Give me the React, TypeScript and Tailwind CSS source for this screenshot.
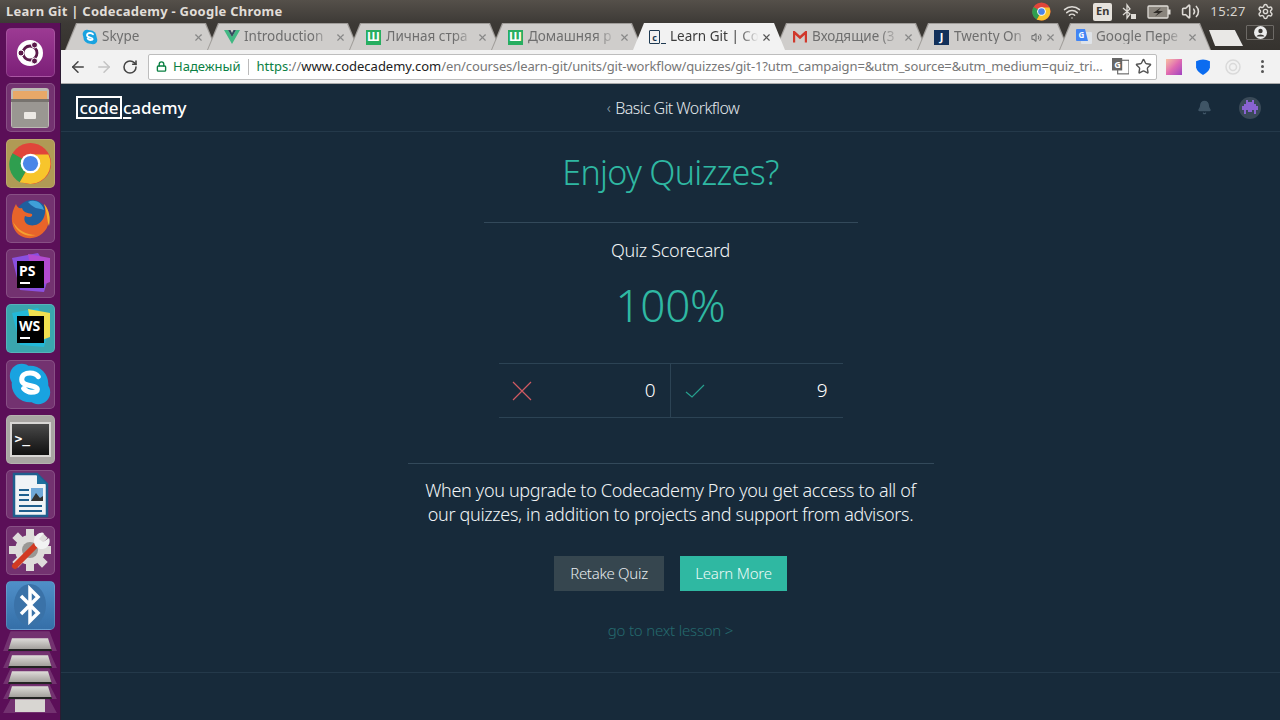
import { ArrowLeft, ArrowRight, Bell, Lock, RotateCw, Settings, Star, Volume2, Wifi, X } from "lucide-react";
import type { ReactNode } from "react";

const sans = "font-['Noto_Sans',sans-serif]";

function ChromeLogo({ size }: { size: number }) {
  return (
    <svg width={size} height={size} viewBox="0 0 48 48">
      <circle cx="24" cy="24" r="23" fill="#e0453a" />
      <path d="M24 24 L12 45 A23 23 0 0 1 4 12.500 Z" fill="#2f9e4f" />
      <path d="M24 14 L44 14 A23 23 0 0 1 24 47 L12 45 L24 24 Z" fill="#f7c52c" />
      <circle cx="24" cy="24" r="11" fill="#fff" />
      <circle cx="24" cy="24" r="8.500" fill="#4a86e8" />
    </svg>
  );
}

function SkypeLogo({ size }: { size: number }) {
  return (
    <svg width={size} height={size} viewBox="0 0 48 48">
      <circle cx="15" cy="15" r="13" fill="#19a3e0" />
      <circle cx="33" cy="33" r="13" fill="#19a3e0" />
      <circle cx="24" cy="24" r="20" fill="#19a3e0" />
      <path d="M33 16c-2-3-5-4-9-4-5 0-9 2-9 7 0 9 17 5 17 11 0 2-3 3-7 3-4 0-6-2-8-4" fill="none" stroke="#fff" strokeWidth="5.500" strokeLinecap="round" />
    </svg>
  );
}

function Tile({ children, className = "bg-white/15" }: { children?: ReactNode; className?: string }) {
  return (
    <div className={`w-[49px] h-[49px] rounded-[5px] flex items-center justify-center border border-white/15 overflow-hidden ${className}`}>
      {children}
    </div>
  );
}

function JetBrains({ label, colors }: { label: string; colors: string[] }) {
  return (
    <svg width="44" height="44" viewBox="0 0 44 44">
      <path d="M4 6 L30 1 L42 20 L36 40 L12 38 Z" fill={colors[0]} />
      <path d="M20 2 L42 6 L42 30 L26 36 Z" fill={colors[1]} />
      <rect x="9" y="9" width="27" height="27" fill="#000" />
      <text x="11" y="24" fontSize="14" fontWeight="700" fill="#fff" fontFamily="Noto Sans, sans-serif">{label}</text>
      <rect x="12" y="30" width="10" height="2" fill="#fff" />
    </svg>
  );
}

function Launcher() {
  return (
    <aside className="w-[61px] shrink-0 bg-[#5b0f58] border-r border-[#2c1c33] flex flex-col items-center pt-[5px] gap-[6.300px] overflow-hidden">
      <Tile className="bg-gradient-to-b from-[#9c3a93] to-[#7c1f78]">
        <svg width="30" height="30" viewBox="0 0 30 30">
          <circle cx="15" cy="15" r="13" fill="#fff" />
          <circle cx="15" cy="15" r="7" fill="none" stroke="#5b1a4a" strokeWidth="2.800" />
          <circle cx="6" cy="15" r="3" fill="#5b1a4a" stroke="#fff" />
          <circle cx="19.500" cy="7" r="3" fill="#5b1a4a" stroke="#fff" />
          <circle cx="19.500" cy="23" r="3" fill="#5b1a4a" stroke="#fff" />
        </svg>
      </Tile>
      <Tile className="bg-white/15">
        <svg width="42" height="44" viewBox="0 0 42 44">
          <rect x="2" y="2" width="38" height="40" rx="3" fill="#bdbab5" />
          <rect x="4" y="5" width="34" height="8" fill="#e8a868" />
          <rect x="2" y="13" width="38" height="3" fill="#77736e" />
          <rect x="3" y="16" width="36" height="25" fill="#9a9792" />
          <rect x="15" y="26" width="12" height="7" rx="1" fill="#ece9e4" />
        </svg>
      </Tile>
      <Tile className="bg-[#b09a55]">
        <ChromeLogo size={43} />
      </Tile>
      <Tile>
        <svg width="44" height="44" viewBox="0 0 44 44">
          <circle cx="24" cy="20" r="16" fill="#1f5f9e" />
          <path d="M20 6 C26 3 34 6 36 14 C32 12 28 13 26 11 C24 10 22 8 20 6Z" fill="#3f9fd8" />
          <path d="M8 8 C1 20 3 34 13 40 C25 46 39 39 41 25 C42 17 39 11 36 8 C39 16 36 25 30 28 C22 32 14 27 17 20 C21 22 25 21 24 18 C19 17 15 16 14 12 C11 13 9 11 8 8Z" fill="#e8642a" />
          <path d="M36 8 C41 14 43 22 41 30 C39 25 39 15 36 8Z" fill="#f5b52e" />
          <path d="M5 26 C8 36 18 42 28 39 C18 39 10 34 5 26Z" fill="#f5a030" />
        </svg>
      </Tile>
      <Tile>
        <JetBrains label="PS" colors={["#8a4fe0", "#b34ad0"]} />
      </Tile>
      <Tile className="bg-[#3aa5ae]">
        <JetBrains label="WS" colors={["#22b8d8", "#f0e050"]} />
      </Tile>
      <Tile>
        <SkypeLogo size={44} />
      </Tile>
      <Tile className="bg-[#a8a5a2]">
        <div className="w-[41px] h-[35px] bg-gradient-to-b from-[#4a4a4a] to-[#111] border-2 border-[#d8d6d4] flex items-center pl-[3px] pb-[3px]">
          <span className="font-['DejaVu_Sans_Mono',monospace] text-[13px] font-bold leading-none text-white">&gt;_</span>
        </div>
      </Tile>
      <Tile>
        <svg width="38" height="46" viewBox="0 0 38 46">
          <path d="M3 2 H26 L36 12 V44 H3 Z" fill="#f0f3f6" stroke="#1f5f8e" strokeWidth="2.500" />
          <path d="M26 2 L36 12 H26 Z" fill="#1f6f9e" />
          <rect x="8" y="17" width="10" height="2" fill="#1f5f8e" />
          <rect x="8" y="22" width="10" height="2" fill="#1f5f8e" />
          <rect x="8" y="27" width="10" height="2" fill="#1f5f8e" />
          <rect x="8" y="33" width="23" height="2" fill="#1f5f8e" />
          <rect x="8" y="38" width="23" height="2" fill="#1f5f8e" />
          <rect x="20" y="16" width="12" height="13" fill="#6fa8d8" />
          <path d="M20 29 L25 21 L29 26 L32 24 V29 Z" fill="#333" />
        </svg>
      </Tile>
      <Tile>
        <svg width="44" height="44" viewBox="0 0 44 44">
          <g fill="#dedcda">
            <circle cx="22" cy="22" r="15" />
            {[0, 45, 90, 135, 180, 225, 270, 315].map((angle) => (
              <rect key={angle} x="18" y="1" width="8" height="10" transform={`rotate(${angle} 22 22)`} />
            ))}
          </g>
          <circle cx="22" cy="22" r="8" fill="#9a9794" />
          <path d="M7 38 L27 18" stroke="#d23a22" strokeWidth="6" strokeLinecap="round" />
          <path d="M26 12 A8 8 0 0 0 35 21 A8 8 0 0 0 41 10 L35 14 L31 11 L36 5 A8 8 0 0 0 26 12Z" fill="#f2f2f2" />
        </svg>
      </Tile>
      <Tile className="bg-gradient-to-b from-[#4f8fc8] to-[#356fa8]">
        <svg width="34" height="44" viewBox="0 0 34 44">
          <ellipse cx="17" cy="22" rx="16" ry="21" fill="#3a72a8" />
          <path d="M8 13 L25 30 L17 38 V6 L25 14 L8 31" fill="none" stroke="#fff" strokeWidth="3.500" />
        </svg>
      </Tile>
      <div className="flex flex-col items-center gap-[0px] -mt-[5px]">
        {[20, 17, 16, 15].map((height) => (
          <div key={height} style={{ height }} className="w-[54px] bg-white/15 [clip-path:polygon(14%_0,86%_0,100%_100%,0_100%)] flex items-end justify-center">
            <div className="w-[44px] h-[13px] bg-gradient-to-b from-[#e0dedb] to-[#a3a09c] border-b-2 border-[#222] [clip-path:polygon(9%_0,91%_0,100%_100%,0_100%)]" />
          </div>
        ))}
        <div className="w-[54px] h-[14px] bg-white/15 [clip-path:polygon(14%_0,86%_0,100%_100%,0_100%)] flex justify-center">
          <div className="w-[30px] h-[13px] bg-[#d8d6d2]" />
        </div>
      </div>
    </aside>
  );
}

function TitleBar() {
  return (
    <header className={`h-[23px] bg-gradient-to-b from-[#55504a] to-[#3d3a36] flex items-center pl-[6px] text-[#e0ddd8] ${sans}`}>
      <span className="text-[13px] font-bold leading-none tracking-[0.25px] flex-1">Learn Git | Codecademy - Google Chrome</span>
      <div className="flex items-center">
        <ChromeLogo size={19} />
        <Wifi className="ml-[12px] text-[#dedbd6]" size={18} strokeWidth={2} />
        <span className="ml-[12px] w-[19px] h-[18px] rounded-[2px] bg-[#e6e2dc] text-[#3b3833] text-[11px] font-bold flex items-center justify-center">En</span>
        <svg className="ml-[10px]" width="14" height="18" viewBox="0 0 14 18" fill="none" stroke="#dedbd6" strokeWidth="1.300">
          <path d="M1 5 L8 11 L5 15 V2 L8 6 L1 12" />
          <rect x="9" y="11" width="5" height="5" fill="#dedbd6" stroke="none" />
        </svg>
        <svg className="ml-[11px]" width="24" height="14" viewBox="0 0 24 14">
          <rect x="1" y="1" width="20" height="12" rx="1" fill="#8a857d" stroke="#dedbd6" strokeWidth="1.300" />
          <rect x="21" y="4.500" width="2.500" height="5" fill="#dedbd6" />
          <path d="M14 2.500 L6 8 H11 L8 11.500 L16 6 H11 Z" fill="#2f2c28" />
        </svg>
        <Volume2 className="ml-[10px] text-[#dedbd6]" size={19} strokeWidth={2} />
        <span className="ml-[10px] text-[13px] tracking-[0.5px] text-[#d8d5d0]">15:27</span>
        <Settings className="ml-[11px] mr-[6px] text-[#dedbd6]" size={17} strokeWidth={2} />
      </div>
    </header>
  );
}

type TabInfo = { title: string; icon: ReactNode; active?: boolean; audio?: boolean };

const tabs: TabInfo[] = [
  { title: "Skype", icon: <SkypeLogo size={16} /> },
  {
    title: "Introduction",
    icon: (
      <svg width="16" height="14" viewBox="0 0 16 14">
        <path d="M0 0 H4 L8 7 L12 0 H16 L8 14 Z" fill="#41b883" />
        <path d="M4 0 H6.500 L8 3 L9.500 0 H12 L8 7 Z" fill="#35495e" />
      </svg>
    ),
  },
  { title: "Личная стра", icon: <Sh /> },
  { title: "Домашняя р", icon: <Sh /> },
  {
    title: "Learn Git | Co",
    active: true,
    icon: (
      <span className="flex items-end">
        <span className="w-[11px] h-[14px] border-[1.500px] border-[#1f3a52] rounded-[1px] flex items-center justify-center text-[9px] font-bold leading-none text-[#1f3a52]">c</span>
        <span className="w-[5px] h-[1.500px] bg-[#1f3a52] ml-[1px]" />
      </span>
    ),
  },
  {
    title: "Входящие (3",
    icon: (
      <svg width="14" height="12" viewBox="0 0 14 12">
        <path d="M1 11.500 V1 L7 6.500 L13 1 V11.500" fill="none" stroke="#d0382c" strokeWidth="2.400" />
      </svg>
    ),
  },
  {
    title: "Twenty On",
    audio: true,
    icon: <span className="w-[15px] h-[15px] bg-[#12305a] text-white text-[11px] font-bold flex items-center justify-center">J</span>,
  },
  {
    title: "Google Пере",
    icon: (
      <svg width="16" height="16" viewBox="0 0 16 16">
        <rect x="5" y="3" width="11" height="12" rx="1" fill="#dfe3e8" />
        <path d="M1 0 H9 L12 12 H1 Q0 12 0 11 V1 Q0 0 1 0Z" fill="#4285f4" />
        <text x="2.500" y="9" fontSize="8" fontWeight="700" fill="#fff" fontFamily="Noto Sans, sans-serif">G</text>
      </svg>
    ),
  },
];

function Sh() {
  return <span className="w-[15px] h-[15px] bg-[#27ae60] text-white text-[12px] font-bold leading-none flex items-center justify-center">Ш</span>;
}

function TabStrip() {
  return (
    <div className={`h-[27px] bg-gradient-to-b from-[#3d3a36] to-[#35322e] flex pl-[4px] ${sans}`}>
      {tabs.map((tab) => (
        <div
          key={tab.title}
          className={`w-[152px] h-[27px] -mr-[10px] shrink-0 [clip-path:polygon(11px_0,calc(100%-11px)_0,100%_100%,0_100%)] pt-[1px] px-[1px] ${tab.active ? "bg-[#f2f2f2] relative z-10" : "bg-[#a09d9a]"}`}
        >
          <div className={`h-full flex items-center pl-[15px] pr-[12px] [clip-path:polygon(11px_0,calc(100%-11px)_0,100%_100%,0_100%)] ${tab.active ? "bg-[#f2f2f2]" : "bg-[#cfcdcb]"}`}>
            <span className="w-[17px] shrink-0 flex justify-center">{tab.icon}</span>
            <span className={`ml-[4px] flex-1 whitespace-nowrap text-[13.500px] leading-none [mask-image:linear-gradient(to_right,#000_75%,transparent_97%)] ${tab.active ? "text-[#3c3c3c]" : "text-[#6e6e6e]"}`}>
              {tab.title}
            </span>
            {tab.audio && <Volume2 className="text-[#777] mr-[3px]" size={11} strokeWidth={2.500} />}
            <X className={tab.active ? "text-[#555]" : "text-[#888]"} size={11} strokeWidth={2.500} />
          </div>
        </div>
      ))}
      <div className="ml-[8px] mt-[7px] w-[34px] h-[16px] bg-[#e9e8e6] [clip-path:polygon(0_0,76%_0,100%_100%,18%_100%)]" />
      <div className="ml-auto mr-[6px] mt-[2px] w-[28px] h-[15px] border border-[#6d6a66] rounded-[1px] flex items-center justify-center">
        <svg width="13" height="13" viewBox="0 0 13 13">
          <circle cx="6.500" cy="6.500" r="6.500" fill="#ececec" />
          <circle cx="6.500" cy="5" r="2.200" fill="#3d3a36" />
          <path d="M2.500 10.500 C3.500 7.800 9.500 7.800 10.500 10.500Z" fill="#3d3a36" />
        </svg>
      </div>
    </div>
  );
}

function Toolbar() {
  return (
    <div className={`h-[34px] bg-[#f2f2f2] border-b border-[#a9a9a9] flex items-center pl-[8px] ${sans}`}>
      <ArrowLeft className="text-[#444]" size={18} strokeWidth={2} />
      <ArrowRight className="ml-[8px] text-[#c4c4c4]" size={18} strokeWidth={2} />
      <RotateCw className="ml-[9px] text-[#444]" size={16} strokeWidth={2.300} />
      <div className="ml-[10px] w-[1009px] h-[26px] bg-white border border-[#bdbdbd] rounded-[2px] flex items-center pl-[7px] text-[13px] whitespace-nowrap">
        <Lock className="text-[#0b8043]" size={11} strokeWidth={3} />
        <span className="ml-[6px] text-[#0b8043]">Надежный</span>
        <span className="ml-[8px] w-px h-[16px] bg-[#bbb]" />
        <span className="ml-[7px] text-[#0b8043]">https</span>
        <span className="text-[#777]">://</span>
        <span className="text-[#222]">www.codecademy.com</span>
        <span className="text-[#777] flex-1 tracking-[-0.12px]">/en/courses/learn-git/units/git-workflow/quizzes/git-1?utm_campaign=&amp;utm_source=&amp;utm_medium=quiz_tri…</span>
        <svg width="17" height="17" viewBox="0 0 15 15">
          <rect x="5" y="2" width="10" height="12" fill="#fff" stroke="#666" />
          <rect x="0" y="0" width="9" height="11" fill="#666" />
          <text x="2" y="8.500" fontSize="8" fontWeight="700" fill="#fff" fontFamily="Noto Sans, sans-serif">G</text>
        </svg>
        <Star className="ml-[6px] mr-[4px] text-[#555]" size={17} strokeWidth={2} />
      </div>
      <span className="ml-[9px] w-[16px] h-[16px] bg-gradient-to-br from-[#f7c0a0] via-[#e06ab0] to-[#a040c0]" />
      <svg className="ml-[13px]" width="16" height="16" viewBox="0 0 15 15">
        <path d="M1 2 Q7.500 -1 14 2 V8 Q13 12 7.500 15 Q2 12 1 8Z" fill="#0b6cf0" />
      </svg>
      <svg className="ml-[14px]" width="16" height="16" viewBox="0 0 16 16" fill="none" stroke="#dadada" strokeWidth="1.500">
        <circle cx="8" cy="8" r="7" />
        <circle cx="8" cy="8" r="3.500" />
      </svg>
      <span className="ml-[20px] flex flex-col gap-[2px]">
        <span className="w-[3px] h-[3px] rounded-full bg-[#555]" />
        <span className="w-[3px] h-[3px] rounded-full bg-[#555]" />
        <span className="w-[3px] h-[3px] rounded-full bg-[#555]" />
      </span>
    </div>
  );
}

function SiteHeader() {
  return (
    <div className="h-[48px] border-b border-[#24394a] flex items-center pl-[15px] pr-[19px]">
      <div className="w-[200px] flex items-center text-white text-[17px] font-medium leading-none">
        <span className="w-[46px] h-[23px] border-2 border-white flex items-center justify-center">code</span>
        <span className="ml-[1px] underline underline-offset-[3px] decoration-[2px] [text-decoration-skip-ink:none]">c</span>
        <span>ademy</span>
      </div>
      <div className="flex-1 flex items-center justify-center pl-[9px] text-[#e3e8ec] text-[16px] font-light tracking-[-0.55px]">
        <span className="mr-[5px] text-[#9aa8b3] text-[15px]">‹</span>
        Basic Git Workflow
      </div>
      <div className="w-[200px] flex items-center justify-end">
        <Bell className="text-[#3f5566]" size={15} fill="#3f5566" />
        <span className="ml-[27px] w-[22px] h-[22px] rounded-full bg-[#3a4a58] flex items-center justify-center">
          <svg width="16" height="16" viewBox="0 0 8 8" fill="#8a63d2">
            <path d="M2 0h1v1H2zM5 0h1v1H5zM2 1h4v1H2zM1 2h6v1H1zM0 3h8v2H0zM1 5h1v2H1zM6 5h1v2H6zM3 5h2v1H3z" />
          </svg>
        </span>
      </div>
    </div>
  );
}

function Quiz() {
  return (
    <main className="flex flex-col items-center">
      <h1 className="mt-[16px] h-[48px] text-[34px] leading-[48px] font-light tracking-[-0.7px] text-[#2fb8a2]">Enjoy Quizzes?</h1>
      <div className="mt-[26px] w-[374px] border-t border-[#33495a]" />
      <p className="mt-[15px] text-[18px] leading-[24px] font-light tracking-[-0.3px] text-[#f0f4f6]">Quiz Scorecard</p>
      <p className="mt-[13px] text-[44px] leading-[60px] font-light tracking-[-0.3px] text-[#2fb8a2]">100%</p>
      <div className="mt-[28px] w-[344px] h-[55px] border-y border-[#2c4354] flex">
        <div className="w-[172px] border-r border-[#2c4354] flex items-center justify-between pl-[13px] pr-[14px]">
          <svg width="20" height="20" viewBox="0 0 20 20" fill="none" stroke="#d05a62" strokeWidth="1.200">
            <path d="M1 1 L19 19 M19 1 L1 19" />
          </svg>
          <span className="text-[19px] font-light text-white">0</span>
        </div>
        <div className="flex-1 flex items-center justify-between pl-[14px] pr-[15px]">
          <svg width="20" height="14" viewBox="0 0 20 14" fill="none" stroke="#27a08e" strokeWidth="1.200">
            <path d="M1 8 L7 13 L19 1" />
          </svg>
          <span className="text-[19px] font-light text-white">9</span>
        </div>
      </div>
      <div className="mt-[45px] w-[526px] border-t border-[#33495a]" />
      <p className="mt-[15px] w-[526px] text-center text-[18px] leading-[23.500px] font-light tracking-[-0.33px] text-[#f0f4f6]">
        When you upgrade to Codecademy Pro you get access to all of
        <br />
        our quizzes, in addition to projects and support from advisors.
      </p>
      <div className="mt-[30px] flex gap-[16px]">
        <button className="w-[110px] h-[35px] bg-[#36464f] text-[#e6ebee] text-[15px] font-light tracking-[-0.3px]">Retake Quiz</button>
        <button className="w-[107px] h-[35px] bg-[#2fb8a2] text-[#eefaf8] text-[15px] font-light tracking-[-0.2px]">Learn More</button>
      </div>
      <a className="mt-[28px] text-[15px] leading-[22px] font-light tracking-[-0.2px] text-[#256b6e]">go to next lesson &gt;</a>
      <div className="mt-[31px] w-full border-t border-[#24394a]" />
    </main>
  );
}

export default function App() {
  return (
    <div className={`w-[1280px] h-[720px] overflow-hidden flex flex-col bg-[#172a3a] ${sans}`}>
      <TitleBar />
      <div className="flex flex-1 min-h-0">
        <Launcher />
        <div className="flex-1 min-w-0 flex flex-col">
          <TabStrip />
          <Toolbar />
          <SiteHeader />
          <Quiz />
        </div>
      </div>
    </div>
  );
}
